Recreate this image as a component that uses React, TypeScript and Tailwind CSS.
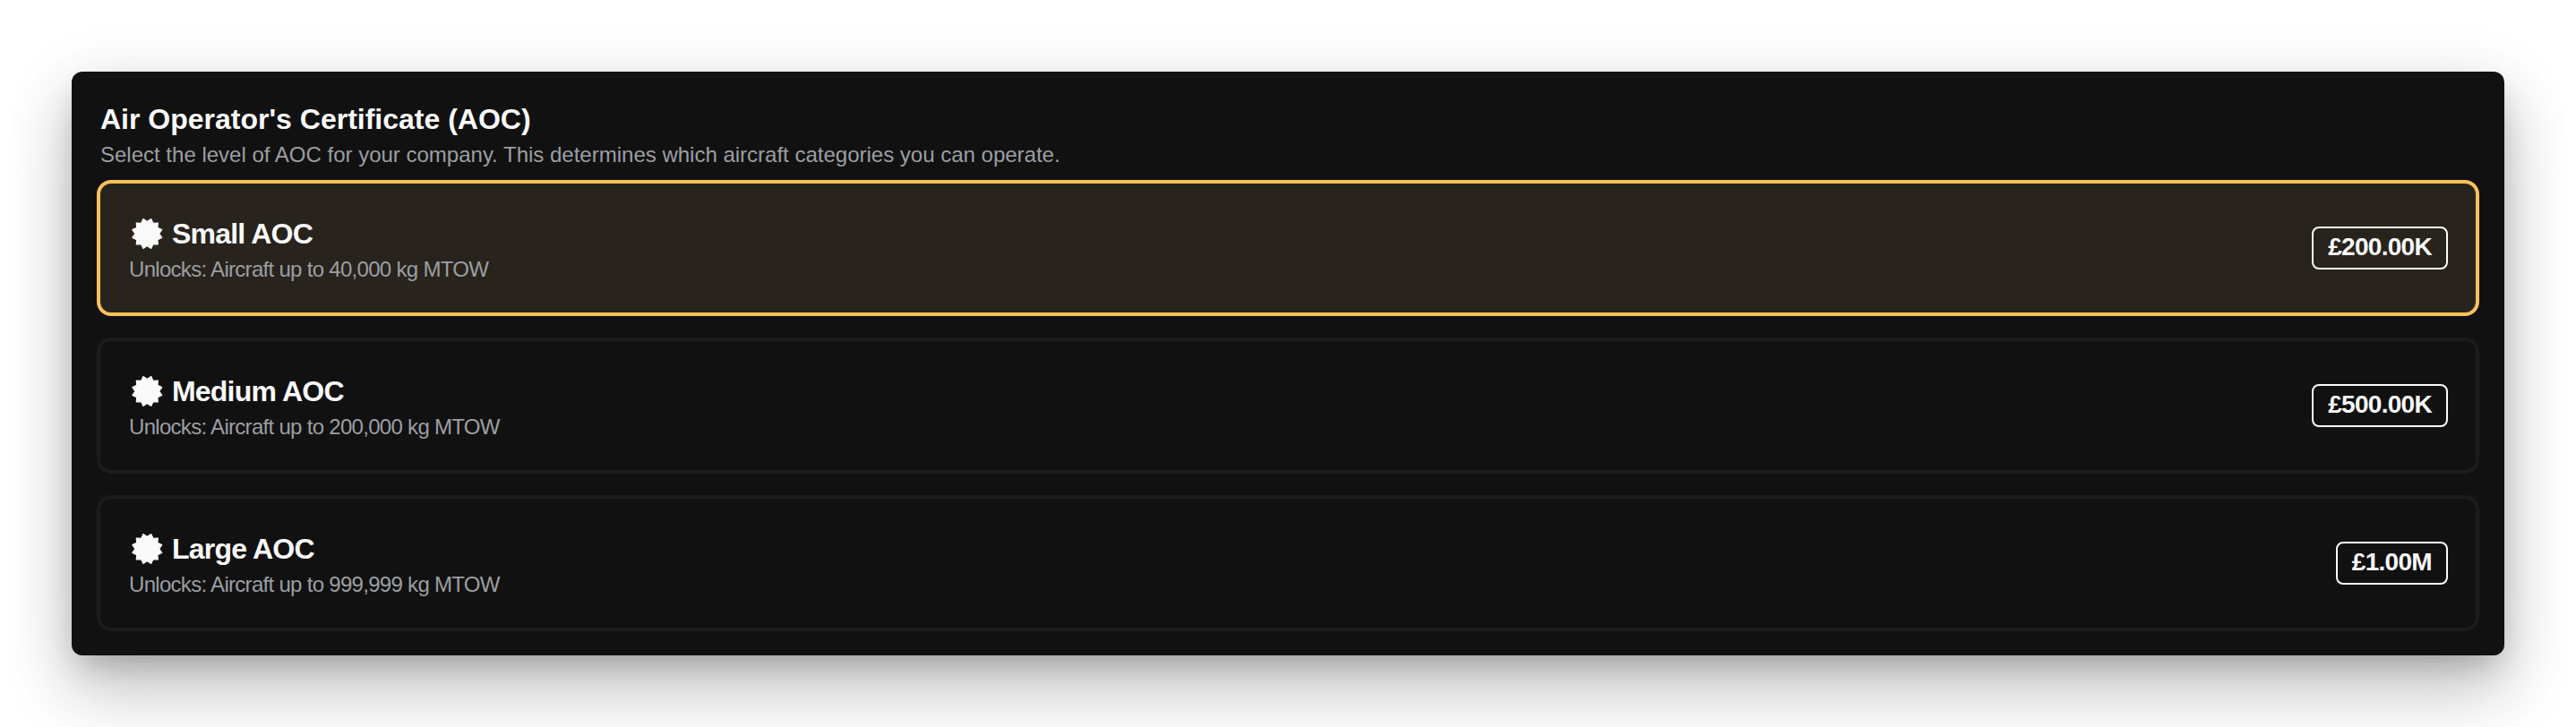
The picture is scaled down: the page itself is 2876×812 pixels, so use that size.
import React, { useState } from 'react';

interface Certificate {
  id: string;
  name: string;
  maxWeight: string;
  price: string;
}

const certificates: Certificate[] = [
  { id: 'small', name: 'Small AOC', maxWeight: '40,000', price: '£200.00K' },
  { id: 'medium', name: 'Medium AOC', maxWeight: '200,000', price: '£500.00K' },
  { id: 'large', name: 'Large AOC', maxWeight: '999,999', price: '£1.00M' },
];

// Twelve-pointed seal
const sealPoints = Array.from({ length: 24 }, (_, i) => {
  const angle = ((15 + i * 15) * Math.PI) / 180;
  const radius = i % 2 ? 13.4 : 17;
  return `${(20.3 + radius * Math.sin(angle)).toFixed(2)},${(20 - radius * Math.cos(angle)).toFixed(2)}`;
}).join(' ');

const SealIcon: React.FC = () => (
  <svg
    viewBox="0 0 40 40"
    className="h-10 w-10 shrink-0"
    fill="currentColor"
    stroke="currentColor"
    strokeWidth="1.2"
    strokeLinejoin="round"
  >
    <polygon points={sealPoints} />
  </svg>
);

export default function App() {
  const [selected, setSelected] = useState('small');

  return (
    <div className="h-[812px] overflow-hidden bg-white p-20 font-['Liberation_Sans',Arial,sans-serif]">
      <section className="h-[652px] rounded-xl bg-[#111111] px-7 pt-8 text-[#fafafa] shadow-[0_16px_32px_-8px_rgba(0,0,0,0.2),0_44px_76px_2px_rgba(0,0,0,0.15),0_18px_76px_4px_rgba(0,0,0,0.12)]">
        <header className="px-1">
          <h2 className="text-[32px] leading-[42px] font-bold">Air Operator's Certificate (AOC)</h2>
          <p className="text-2xl leading-[38px] text-[#9b9fa3]">
            Select the level of AOC for your company. This determines which aircraft categories you can operate.
          </p>
        </header>

        <div className="mt-[9px] flex flex-col gap-6">
          {certificates.map((cert) => (
            <button
              key={cert.id}
              onClick={() => setSelected(cert.id)}
              className={`flex h-[152px] items-center justify-between rounded-2xl border-4 pr-[31px] pl-8 text-left ${
                selected === cert.id ? 'border-[#f9c25c] bg-[#28231c]' : 'border-[#1c1c1c]'
              }`}
            >
              <div className="pt-2">
                <div className="flex items-center gap-2 text-[32px] leading-10 font-bold tracking-tight">
                  <SealIcon />
                  <span>{cert.name}</span>
                </div>
                <p className="text-2xl leading-10 tracking-[-0.7px] text-[#9b9fa3]">
                  Unlocks: Aircraft up to {cert.maxWeight} kg MTOW
                </p>
              </div>
              <span className="rounded-lg border-2 border-[#fafafa] px-4 pb-0.5 text-[28px] leading-[42px] font-bold tracking-tight">
                {cert.price}
              </span>
            </button>
          ))}
        </div>
      </section>
    </div>
  );
}
